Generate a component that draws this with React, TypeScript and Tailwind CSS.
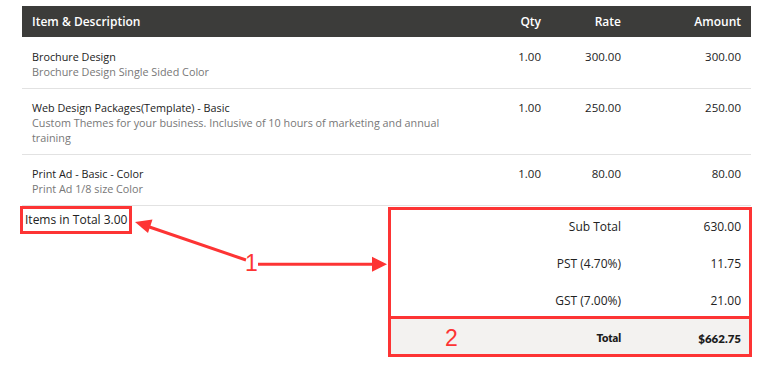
import React from "react"

const items = [
  {
    name: "Brochure Design",
    desc: "Brochure Design Single Sided Color",
    qty: "1.00",
    rate: "300.00",
    amount: "300.00",
  },
  {
    name: "Web Design Packages(Template) - Basic",
    desc: "Custom Themes for your business. Inclusive of 10 hours of marketing and annual training",
    qty: "1.00",
    rate: "250.00",
    amount: "250.00",
  },
  {
    name: "Print Ad - Basic - Color",
    desc: "Print Ad 1/8 size Color",
    qty: "1.00",
    rate: "80.00",
    amount: "80.00",
  },
]

const taxes = [
  { label: "Sub Total", value: "630.00" },
  { label: "PST (4.70%)", value: "11.75" },
  { label: "GST (7.00%)", value: "21.00" },
]

const cols = "grid grid-cols-[1fr_80px_80px_120px]"

const App = () => {
  return (
    <main className="relative min-h-[383px] bg-white font-['Open_Sans',sans-serif] text-[#222]">
      <div className="ml-[22px] w-[729px] pt-[6px]">
        {/* header */}
        <div className={`${cols} h-[31px] items-center bg-[#3c3c3a] text-[12px] font-semibold text-white`}>
          <div className="pl-[10px]">Item &amp; Description</div>
          <div className="pr-[10px] text-right">Qty</div>
          <div className="pr-[10px] text-right">Rate</div>
          <div className="pr-[10px] text-right">Amount</div>
        </div>

        {items.map((item, i) => (
          <div
            key={item.name}
            className={`${cols} border-b border-[#e2e2e2] pb-[9px] text-[11.5px] leading-[15px] ${i === 0 ? "pt-[12px]" : "pt-[11px]"}`}
          >
            <div className="pl-[10px] pr-[24px] text-[10.8px]">
              <div>{item.name}</div>
              <div className="text-[#777]">{item.desc}</div>
            </div>
            <div className="pr-[10px] text-right">{item.qty}</div>
            <div className="pr-[10px] text-right">{item.rate}</div>
            <div className="pr-[10px] text-right">{item.amount}</div>
          </div>
        ))}

        {/* totals */}
        <div className="flex">
          <div className="flex-1">
            <div className="-ml-[2px] inline-block border-[3px] border-[#fd3434] px-[2px] text-[12px] leading-[22px]">
              Items in Total 3.00
            </div>
          </div>
          <div className="mt-px -mr-px w-[364px] border-[3px] border-[#fd3434]">
            <div className="flex flex-col gap-[21px] pt-[9px] pb-[7px] text-[12px] leading-[16px]">
              {taxes.map((t) => (
                <div key={t.label} className="grid grid-cols-[1fr_120px]">
                  <div className="pr-[8px] text-right">{t.label}</div>
                  <div className="pr-[8px] text-right">{t.value}</div>
                </div>
              ))}
            </div>
            <div className="grid h-[38px] grid-cols-[1fr_120px] items-center border-t-[3px] border-[#fd3434] bg-[#f3f2f0] font-['Lato',sans-serif] font-extrabold text-[#1c1c1c]">
              <div className="flex items-center justify-between pr-[8px]">
                <span className="pt-[3px] pl-[54px] font-['Liberation_Sans',sans-serif] text-[23px] leading-none font-normal text-[#fd3434]">2</span>
                <span className="pt-[4px] text-[11px]">Total</span>
              </div>
              <div className="pr-[8px] pt-[4px] text-right text-[11.5px]">$662.75</div>
            </div>
          </div>
        </div>
      </div>

      {/* annotation 1 with arrows */}
      <svg className="pointer-events-none absolute top-0 left-0" width="771" height="383">
        <line x1="246" y1="260" x2="148" y2="226.5" stroke="#fd3434" strokeWidth="3" />
        <polygon points="135,222 152.5,219.5 148,233" fill="#fd3434" />
        <line x1="258" y1="264.3" x2="373" y2="264.3" stroke="#fd3434" strokeWidth="3" />
        <polygon points="387,264.3 372,256.8 372,271.8" fill="#fd3434" />
      </svg>
      <span className="pointer-events-none absolute top-[250px] left-[245px] font-['Liberation_Sans',sans-serif] text-[23px] leading-[26px] text-[#fd3434]">
        1
      </span>
    </main>
  )
}

export default App
